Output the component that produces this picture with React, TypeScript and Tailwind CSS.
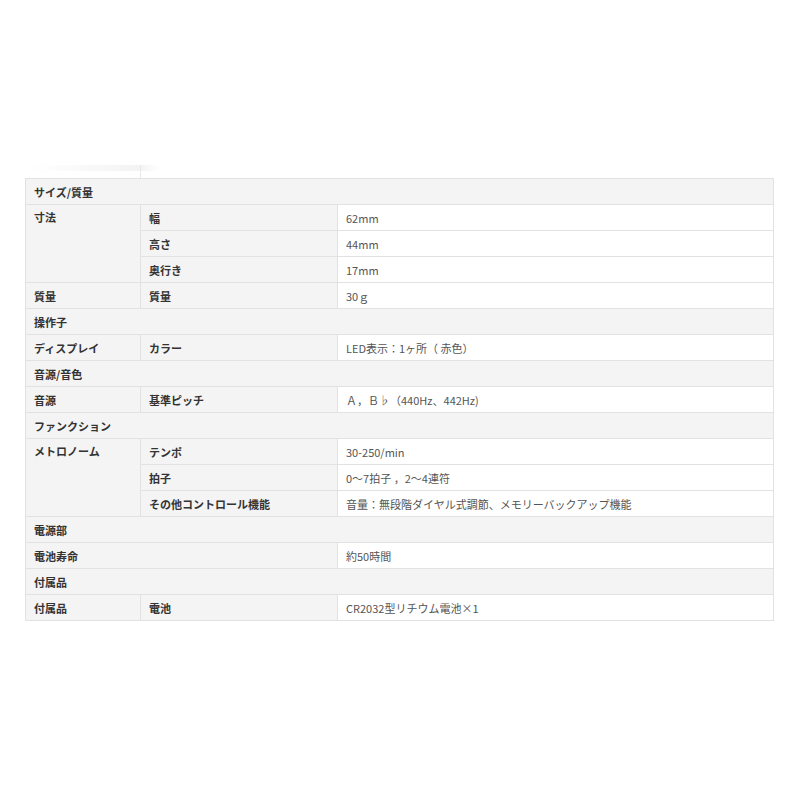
const font = { fontFamily: '"Noto Sans CJK JP", "Noto Sans", sans-serif' };

type Row =
  | { kind: 'section'; label: string }
  | { kind: 'item'; group?: string; span?: number; sub?: string; value: string; wide?: boolean };

const rows: Row[] = [
  { kind: 'section', label: 'サイズ/質量' },
  { kind: 'item', group: '寸法', span: 3, sub: '幅', value: '62mm' },
  { kind: 'item', sub: '高さ', value: '44mm' },
  { kind: 'item', sub: '奥行き', value: '17mm' },
  { kind: 'item', group: '質量', span: 1, sub: '質量', value: '30ｇ' },
  { kind: 'section', label: '操作子' },
  { kind: 'item', group: 'ディスプレイ', span: 1, sub: 'カラー', value: 'LED表示：1ヶ所（ 赤色）' },
  { kind: 'section', label: '音源/音色' },
  { kind: 'item', group: '音源', span: 1, sub: '基準ピッチ', value: 'Ａ，Ｂ♭（440Hz、442Hz)' },
  { kind: 'section', label: 'ファンクション' },
  { kind: 'item', group: 'メトロノーム', span: 3, sub: 'テンポ', value: '30-250/min' },
  { kind: 'item', sub: '拍子', value: '0～7拍子 ，2～4連符' },
  { kind: 'item', sub: 'その他コントロール機能', value: '音量：無段階ダイヤル式調節、メモリーバックアップ機能' },
  { kind: 'section', label: '電源部' },
  { kind: 'item', group: '電池寿命', span: 1, wide: true, value: '約50時間' },
  { kind: 'section', label: '付属品' },
  { kind: 'item', group: '付属品', span: 1, sub: '電池', value: 'CR2032型リチウム電池×1' },
];

const cell = 'border border-[#e2e2e2] h-[26px] px-[8px] py-0 align-middle text-[11px] leading-[14px]';

export default function App() {
  return (
    <div className="min-h-[800px] w-[800px] bg-white pt-[165px]" style={font}>
      <div className="ml-[30px] flex h-[13px] w-[130px]">
        <div className="h-[6px] w-[110px] bg-gradient-to-r from-white to-[#f3f3f3]" />
        <div className="h-[13px] w-[1px] bg-[#e8e8e8]" />
        <div className="h-[6px] w-[18px] bg-gradient-to-r from-[#f3f3f3] to-white" />
      </div>
      <table className="ml-[25px] w-[749px] table-fixed border-collapse">
        <colgroup>
          <col className="w-[115px]" />
          <col className="w-[197px]" />
          <col />
        </colgroup>
        <tbody>
          {rows.map((r, i) =>
            r.kind === 'section' ? (
              <tr key={i}>
                <td colSpan={3} className={`${cell} bg-[#f4f4f4] font-bold text-[#333]`}>
                  {r.label}
                </td>
              </tr>
            ) : (
              <tr key={i}>
                {r.group && (
                  <td
                    rowSpan={r.span}
                    colSpan={r.wide ? 2 : 1}
                    className={`${cell} bg-[#f4f4f4] font-bold text-[#333] ${r.span && r.span > 1 ? 'align-top pt-[5px]' : ''}`}
                  >
                    {r.group}
                  </td>
                )}
                {r.sub && (
                  <td className={`${cell} bg-[#f4f4f4] font-bold text-[#333]`}>{r.sub}</td>
                )}
                <td className={`${cell} bg-white text-[#555]`}>{r.value}</td>
              </tr>
            )
          )}
        </tbody>
      </table>
    </div>
  );
}
